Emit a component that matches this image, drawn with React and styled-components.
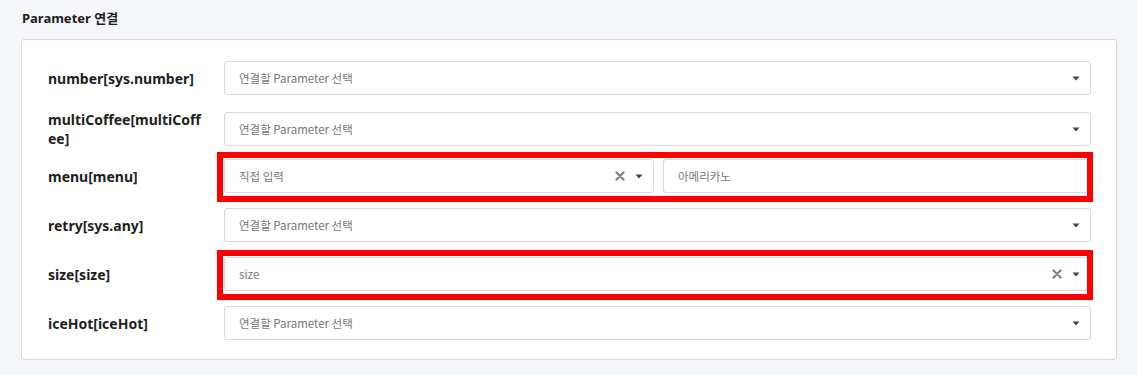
import React from "react";
import styled, { createGlobalStyle } from "styled-components";

const Global = createGlobalStyle`
  html, body { margin: 0; padding: 0; background: #f5f6fa; }
  body { font-family: "Noto Sans", "Noto Sans CJK KR", sans-serif; }
  * { box-sizing: border-box; }
`;

const Page = styled.div`
  padding: 9px 20px 16px 21px;
  background: #f5f6fa;
`;

const Title = styled.h2`
  margin: 0 0 12px 1px;
  font-size: 13px;
  font-weight: 700;
  color: #1d1d1f;
  line-height: 18px;
`;

const Card = styled.div`
  background: #fff;
  border: 1px solid #d3d8e0;
  border-radius: 3px;
  padding: 21px 25px 19px 26px;
  display: flex;
  flex-direction: column;
  gap: 15px;
`;

const Row = styled.div`
  display: grid;
  grid-template-columns: 176px 1fr;
  align-items: center;
  height: 34px;
  position: relative;
`;

const Label = styled.div`
  font-size: 14px;
  font-weight: 700;
  color: #1e1e1e;
  line-height: 19px;
  padding-right: 22px;
  word-break: break-all;
`;

const Fields = styled.div`
  display: flex;
  gap: 9px;
  position: relative;
`;

const Select = styled.div`
  flex: ${(p) => (p.$half ? "0 0 430px" : "1")};
  height: 34px;
  border: 1px solid #d5d9e0;
  border-radius: 3px;
  background: #fff;
  display: flex;
  align-items: center;
  padding: 0 10px 0 14px;
  font-family: "Noto Sans CJK KR", "Noto Sans", sans-serif;
  font-size: 11.5px;
  color: #777;
`;

const Value = styled.span`
  flex: 1;
`;

const TextInput = styled.div`
  flex: 1;
  height: 34px;
  border: 1px solid #d5d9e0;
  border-radius: 3px;
  background: #fff;
  display: flex;
  align-items: center;
  padding: 0 14px;
  font-family: "Noto Sans CJK KR", "Noto Sans", sans-serif;
  font-size: 11.5px;
  color: #777;
`;

const Icons = styled.span`
  display: flex;
  align-items: center;
  gap: 10px;
`;

const Highlight = styled.div`
  position: absolute;
  left: -7px;
  right: -2px;
  top: -7px;
  bottom: -9px;
  border: 6px solid #ff0000;
  pointer-events: none;
`;

const ClearIcon = () => (
  <svg width="10" height="10" viewBox="0 0 10 10">
    <path d="M1.5 1.5 L8.5 8.5 M8.5 1.5 L1.5 8.5" stroke="#858585" strokeWidth="2.4" strokeLinecap="round" />
  </svg>
);

const Caret = () => (
  <svg width="8" height="5" viewBox="0 0 8 5">
    <path d="M0.5 0.5 L7.5 0.5 L4 4.5 Z" fill="#444" />
  </svg>
);

const PLACEHOLDER = "연결할 Parameter 선택";

const rows = [
  { label: "number[sys.number]" },
  { label: "multiCoffee[multiCoffee]" },
  { label: "menu[menu]", value: "직접 입력", clear: true, text: "아메리카노", highlight: true },
  { label: "retry[sys.any]" },
  { label: "size[size]", value: "size", clear: true, highlight: true },
  { label: "iceHot[iceHot]" },
];

export default function App() {
  return (
    <>
      <Global />
      <Page>
        <Title>Parameter 연결</Title>
        <Card>
          {rows.map((r) => (
            <Row key={r.label}>
              <Label>{r.label}</Label>
              <Fields>
                <Select $half={!!r.text}>
                  <Value>{r.value || PLACEHOLDER}</Value>
                  <Icons>
                    {r.clear && <ClearIcon />}
                    <Caret />
                  </Icons>
                </Select>
                {r.text && <TextInput>{r.text}</TextInput>}
                {r.highlight && <Highlight />}
              </Fields>
            </Row>
          ))}
        </Card>
      </Page>
    </>
  );
}
